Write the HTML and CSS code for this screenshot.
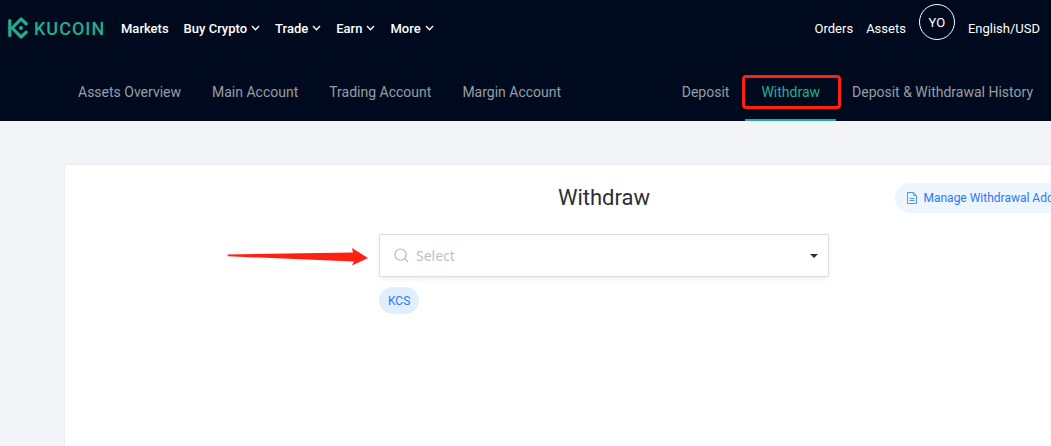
FILE: index.html
```html
<!DOCTYPE html>
<html lang="en">
<head>
<meta charset="utf-8">
<title>Withdraw - KuCoin</title>
<link rel="stylesheet" href="styles.css">
</head>
<body>
<header class="header">
  <div class="topbar">
    <a class="logo" href="#">
      <svg class="logo-mark" viewBox="0 0 20 22" aria-hidden="true">
        <g fill="none" stroke="currentColor" stroke-width="3.2" stroke-linecap="round" stroke-linejoin="round">
          <path d="M1.8 3.6v14.8"/>
          <path d="M18.2 6.800L13 2L4.200 11L13 20L18.200 15.200"/>
        </g>
        <circle cx="13" cy="11" r="2" fill="currentColor"/>
      </svg>
      <span class="logo-text">KUCOIN</span>
    </a>
    <nav class="menu">
      <a class="menu-item" href="#">Markets</a>
      <button class="menu-item" type="button">Buy Crypto<svg class="chevron" viewBox="0 0 9 6" aria-hidden="true"><path d="M1 1l3.5 3.8L8 1"/></svg></button>
      <button class="menu-item" type="button">Trade<svg class="chevron" viewBox="0 0 9 6" aria-hidden="true"><path d="M1 1l3.5 3.8L8 1"/></svg></button>
      <button class="menu-item" type="button">Earn<svg class="chevron" viewBox="0 0 9 6" aria-hidden="true"><path d="M1 1l3.5 3.8L8 1"/></svg></button>
      <button class="menu-item" type="button">More<svg class="chevron" viewBox="0 0 9 6" aria-hidden="true"><path d="M1 1l3.5 3.8L8 1"/></svg></button>
    </nav>
    <div class="user">
      <a class="user-link" href="#">Orders</a>
      <a class="user-link" href="#">Assets</a>
      <button class="avatar" type="button">YO</button>
      <button class="locale" type="button">English/USD</button>
    </div>
  </div>
  <div class="subbar">
    <nav class="tabs">
      <a class="tab" href="#">Assets Overview</a>
      <a class="tab" href="#">Main Account</a>
      <a class="tab" href="#">Trading Account</a>
      <a class="tab" href="#">Margin Account</a>
    </nav>
    <nav class="actions">
      <a class="tab" href="#">Deposit</a>
      <a class="tab tab-active" href="#" aria-current="page">Withdraw<span class="highlight"></span></a>
      <a class="tab" href="#">Deposit &amp; Withdrawal History</a>
    </nav>
  </div>
</header>
<main class="page">
  <section class="card">
    <div class="card-head">
      <h1 class="title">Withdraw</h1>
      <a class="manage" href="#">
        <svg class="doc" viewBox="0 0 10 12" aria-hidden="true"><path d="M.5.5h6l3 3v8h-9zM6.5.5v3h3M2.5 6.5h5M2.5 8.5h5"/></svg>
        Manage Withdrawal Addresses
      </a>
    </div>
    <div class="form">
      <div class="picker">
        <svg class="search" viewBox="0 0 16 16" aria-hidden="true"><circle cx="7" cy="7" r="6"/><path d="M11.3 11.3L15 15"/></svg>
        <select class="coin" aria-label="Coin"><option>Select</option></select>
        <svg class="caret" viewBox="0 0 8 4" aria-hidden="true"><path d="M0 0h8L4 4z"/></svg>
      </div>
      <button class="chip" type="button">KCS</button>
      <svg class="arrow" viewBox="0 0 142 20" aria-hidden="true"><path d="M1 7.500L126 5.500L125 1L141 11L125 18.500L127 14.500L1 9.200Q0 8.300 1 7.500z"/></svg>
    </div>
  </section>
</main>
</body>
</html>
```
FILE: styles.css
```css
* {
  box-sizing: border-box;
}

body {
  margin: 0;
  min-height: 100vh;
  overflow-x: hidden;
  background: #f3f4f8;
  color: #2b2f33;
  font-family: Roboto, "Liberation Sans", sans-serif;
}

a {
  color: inherit;
  text-decoration: none;
}

button {
  padding: 0;
  border: 0;
  background: none;
  color: inherit;
  font: inherit;
}

.header {
  background: #000a1e;
  color: #fff;
  white-space: nowrap;
}

.topbar {
  display: flex;
  align-items: center;
  height: 56px;
  padding: 0 11px 0 8px;
  font-size: 13px;
  font-weight: 500;
}

.logo {
  display: flex;
  align-items: center;
  gap: 6px;
  width: 113px;
  color: #24ae8f;
}

.logo-mark {
  width: 20px;
  height: 22px;
}

.logo-text {
  font-size: 18px;
  letter-spacing: 1px;
}

.menu {
  display: flex;
  gap: 15px;
}

.menu-item {
  display: flex;
  align-items: center;
  gap: 4px;
}

.chevron {
  width: 9px;
  height: 6px;
  fill: none;
  stroke: #fff;
  stroke-width: 1.3;
}

.user {
  display: flex;
  align-items: center;
  gap: 13px;
  margin-left: auto;
  font-weight: 400;
}

.avatar {
  width: 36px;
  height: 36px;
  margin-bottom: 12px;
  border: 1px solid #fff;
  border-radius: 50%;
}

.subbar {
  display: flex;
  justify-content: space-between;
  height: 65px;
  padding: 0 18px 0 78px;
  color: #989da5;
  font-size: 14px;
}

.tabs {
  display: flex;
  gap: 31px;
}

.actions {
  display: flex;
  gap: 16px;
}

.tab {
  line-height: 20px;
  padding-top: 26px;
}

.tab-active {
  position: relative;
  padding-left: 16px;
  padding-right: 16px;
  border-bottom: 2px solid #24ae8f;
  color: #24ae8f;
}

.highlight {
  position: absolute;
  top: 19px;
  left: -3px;
  right: -5px;
  height: 34px;
  border: 3px solid #ff2012;
  border-radius: 4px;
}

.page {
  padding: 44px 0 0 65px;
}

.card {
  min-height: calc(100vh - 165px);
  margin-right: -92px;
  background: #fff;
  box-shadow: 0 0 2px rgba(0, 10, 30, 0.1);
}

.card-head {
  display: grid;
  grid-template-columns: 1fr auto 1fr;
  align-items: center;
  padding: 16px 0 19px;
}

.title {
  grid-column: 2;
  margin: 0;
  font-size: 22px;
  font-weight: 400;
  line-height: 34px;
}

.manage {
  display: flex;
  align-items: center;
  justify-self: end;
  gap: 6px;
  height: 30px;
  margin-right: 42px;
  padding: 0 12px;
  border-radius: 16px;
  background: #edf5ff;
  color: #2878ff;
  font-size: 12px;
  white-space: nowrap;
}

.doc {
  width: 10px;
  height: 12px;
  fill: none;
  stroke: #4c96ff;
}

.form {
  position: relative;
  width: 450px;
  margin: 0 auto;
}

.picker {
  display: flex;
  align-items: center;
  gap: 7px;
  height: 43px;
  padding: 0 10px 0 14px;
  border: 1px solid #dcdcdc;
  border-radius: 2px;
  box-shadow: 0 2px 4px rgba(0, 0, 0, 0.07);
}

.search {
  width: 15px;
  height: 15px;
  fill: none;
  stroke: #b5b5b5;
  stroke-width: 1.2;
}

.coin {
  flex: 1;
  height: 40px;
  padding: 0;
  border: 0;
  appearance: none;
  background: none;
  color: #bfbfbf;
  font-family: "Noto Sans", sans-serif;
  font-size: 14px;
}

.caret {
  width: 8px;
  height: 4px;
  fill: #2b2f33;
}

.chip {
  height: 27px;
  margin-top: 10px;
  padding: 0 9px;
  border-radius: 14px;
  background: #e1eeff;
  color: #2878ff;
  font-size: 12px;
}

.arrow {
  position: absolute;
  top: 13px;
  right: calc(100% + 10px);
  width: 142px;
  height: 20px;
  fill: #ff2012;
}
```
